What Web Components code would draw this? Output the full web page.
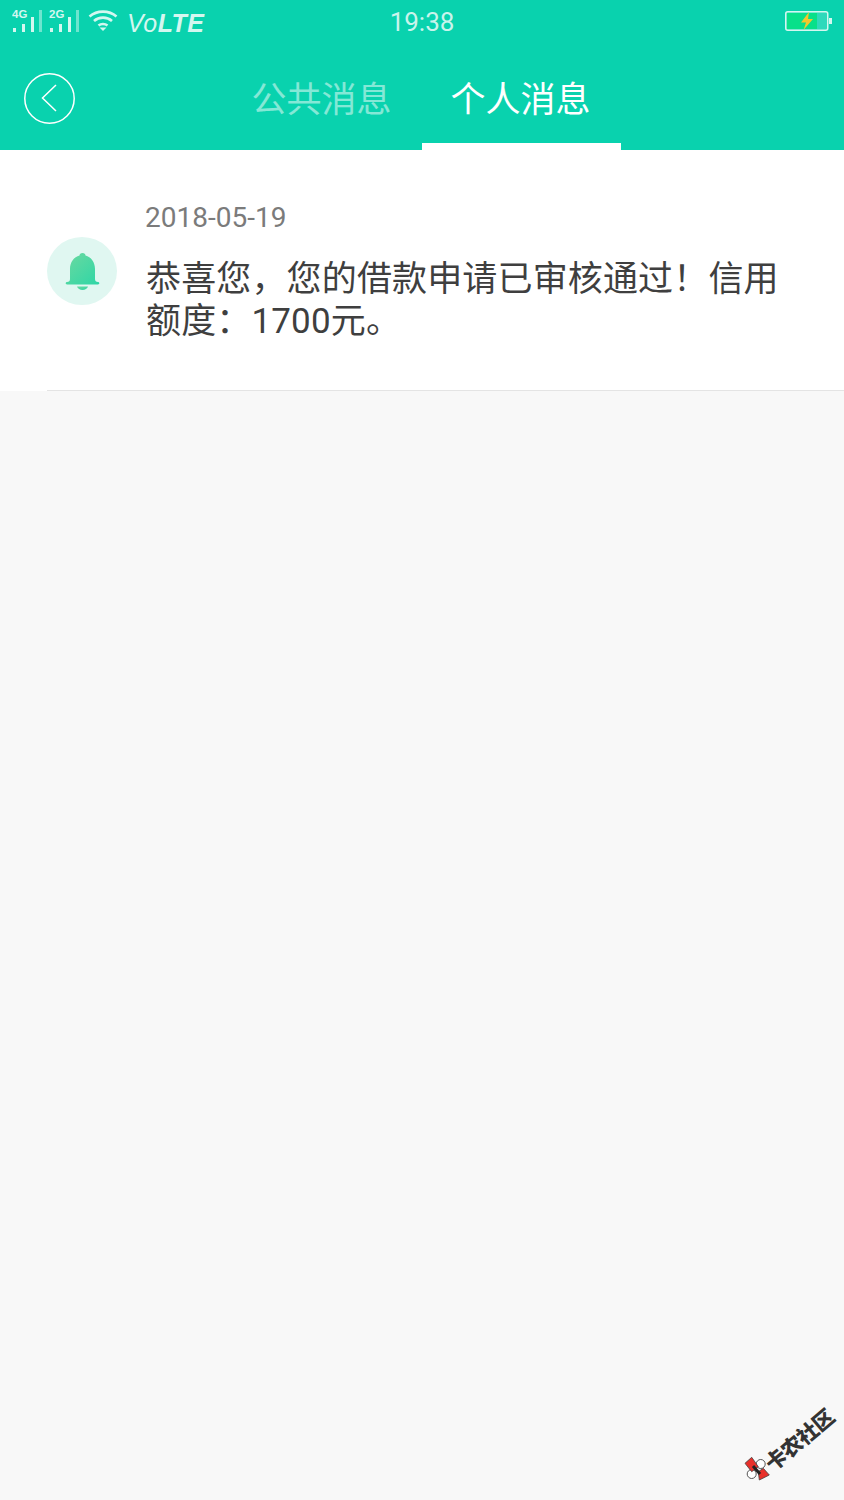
<!DOCTYPE html>
<html lang="zh">
<head>
<meta charset="utf-8">
<title>消息</title>
<style>
html,body{margin:0;padding:0;background:#f8f8f8;}
body{width:844px;height:1500px;position:relative;overflow:hidden;font-family:Roboto,"Noto Sans CJK SC",sans-serif;}
</style>
</head>
<body>
<app-header>
  <status-bar></status-bar>
  <nav-tabs></nav-tabs>
</app-header>
<message-item date="2018-05-19">恭喜您，您的借款申请已审核通过！信用额度：1700元。</message-item>
<water-mark></water-mark>

<script>
class AppHeader extends HTMLElement{
    constructor(){
        super()
        this.attachShadow({mode:'open'})
    }
    connectedCallback(){
        this.shadowRoot.innerHTML = `
        <style>
        :host{display:block;height:150px;background:#09d2ae;}
        </style>
        <slot></slot>
        `
    }
}
customElements.define('app-header',AppHeader)

class StatusBar extends HTMLElement{
    // same bars for both sim slots
    static signal(label){
        return `
        <svg class="sim" width="31" height="30" viewBox="0 -6 31 30">
            <text x="0" y="8">${label}</text>
            <g fill="#d4f7f0">
                <rect x="1" y="18" width="3" height="4"/>
                <rect x="10" y="14" width="3" height="8"/>
                <rect x="19" y="7" width="3" height="15"/>
                <rect x="27" y="0" width="3" height="22" opacity=".5"/>
            </g>
        </svg>`
    }
    constructor(){
        super()
        this.attachShadow({mode:'open'})
    }
    connectedCallback(){
        this.shadowRoot.innerHTML = `
        <style>
        :host{display:grid;grid-template-columns:1fr auto 1fr;height:44px;color:#fff;font-family:Roboto,sans-serif;}
        .left{display:flex;align-items:flex-start;padding:10px 0 0 12px;gap:6px;}
        .sim{margin-top:-6px;}
        .wifi{margin-left:2px;}
        .volte{margin-left:3px;font:italic 25px/26px "Liberation Sans",sans-serif;color:#d4f7f0;letter-spacing:.5px;}
        .volte b{font-weight:700;}
        .time{font-size:26px;line-height:44px;color:#c9f4ec;}
        .right{display:flex;justify-content:flex-end;padding:11px 12px 0 0;}
        svg{display:block;}
        text{font-family:"Liberation Sans",sans-serif;font-weight:700;font-size:11.5px;fill:#d4f7f0;}
        </style>
        <div class="left">
            ${StatusBar.signal('4G')}
            ${StatusBar.signal('2G')}
            <svg class="wifi" width="30" height="21" viewBox="0 0 30 21">
                <g fill="none" stroke="#d4f7f0" stroke-width="2.600">
                    <path d="M1.500 6.500C9 0 21 0 28.500 6.500"/>
                    <path d="M6 11C11 6.500 19 6.500 24 11"/>
                    <path d="M10.500 15.500C13 13.500 17 13.500 19.500 15.500"/>
                </g>
                <path d="M11.500 17.500h7L15 21z" fill="#d4f7f0"/>
            </svg>
            <span class="volte">Vo<b>LTE</b></span>
        </div>
        <span class="time">19:38</span>
        <div class="right">
            <svg width="47" height="20" viewBox="0 0 47 20">
                <rect x=".75" y=".75" width="42" height="18.500" rx="2" fill="#2fd9bb" stroke="#d4f7f0" stroke-width="1.500"/>
                <rect x="2" y="2" width="30" height="16" fill="#08e08a"/>
                <rect x="44" y="7" width="3" height="6" fill="#d4f7f0"/>
                <path d="M24 1 16 11.500h5L18.500 19 28 8h-5z" fill="#f4c72c"/>
            </svg>
        </div>
        `
    }
}
customElements.define('status-bar',StatusBar)

class NavTabs extends HTMLElement{
    constructor(){
        super()
        this.attachShadow({mode:'open'})
    }
    connectedCallback(){
        this.shadowRoot.innerHTML = `
        <style>
        :host{display:flex;height:106px;padding-left:24px;font:400 35px/1 "Noto Sans CJK SC",sans-serif;}
        .back{flex:none;width:51px;height:51px;margin-top:29px;}
        .tabs{display:flex;margin-left:148px;}
        .tab{width:199px;display:flex;justify-content:center;padding:35px 2px 0 0;box-sizing:border-box;height:106px;color:#fff;}
        .off{color:rgba(255,255,255,.5);}
        .on{border-bottom:7px solid #fff;}
        svg{display:block;}
        </style>
        <svg class="back" viewBox="0 0 51 51" fill="none" stroke="#fff" stroke-width="1.500">
            <circle cx="25.500" cy="25.500" r="24.700"/>
            <path d="M32 12 18.500 25 32 38"/>
        </svg>
        <div class="tabs">
            <div class="tab off">公共消息</div>
            <div class="tab on">个人消息</div>
        </div>
        `
    }
}
customElements.define('nav-tabs',NavTabs)

class MessageItem extends HTMLElement{
    constructor(){
        super()
        this.attachShadow({mode:'open'})
    }
    connectedCallback(){
        this.shadowRoot.innerHTML = `
        <style>
        :host{display:block;background:#fff;}
        .row{display:flex;align-items:center;height:241px;box-sizing:border-box;margin-left:47px;border-bottom:1px solid #e4e4e4;}
        .icon{flex:none;width:70px;height:68px;margin:2px 29px 0 0;}
        .body{padding-top:4px;}
        .date{font:28px/34px Roboto,sans-serif;color:#7b7b7b;margin:0 0 24px -1px;}
        .text{width:640px;font:35px/42px Roboto,"Noto Sans CJK SC",sans-serif;letter-spacing:.15px;color:#3f3f3f;}
        svg{display:block;}
        </style>
        <div class="row">
            <svg class="icon" viewBox="0 0 70 68">
                <defs>
                    <linearGradient id="bell" x1="0" y1="0" x2="1" y2="1">
                        <stop offset="0" stop-color="#6cd9a0"/>
                        <stop offset="1" stop-color="#2ed6a6"/>
                    </linearGradient>
                </defs>
                <ellipse cx="35" cy="34" rx="35" ry="34" fill="#e0f7f1"/>
                <path d="M35.500 16c1.800 0 3 1.200 3 2.500C44 20 48 25 48 32V42c0 2 1 3 3 3 .8 0 1.300.6 1.300 1.300 0 .7-.5 1.200-1.300 1.200H20c-.8 0-1.300-.5-1.300-1.200 0-.7.5-1.300 1.300-1.300 2 0 3-1 3-3V32c0-7 4-12 9.500-13.500 0-1.300 1.200-2.500 3-2.500z" fill="url(#bell)"/>
                <path d="M30 49.500h11c-.8 2-2.800 3.500-5.500 3.500s-4.700-1.500-5.500-3.500z" fill="url(#bell)"/>
            </svg>
            <div class="body">
                <div class="date">${this.getAttribute('date')}</div>
                <div class="text"><slot></slot></div>
            </div>
        </div>
        `
    }
}
customElements.define('message-item',MessageItem)

class WaterMark extends HTMLElement{
    constructor(){
        super()
        this.attachShadow({mode:'open'})
    }
    connectedCallback(){
        this.shadowRoot.innerHTML = `
        <style>
        :host{position:absolute;left:740px;top:1405px;width:100px;height:78px;}
        .text{position:absolute;left:18px;top:24px;transform:rotate(-40deg);white-space:nowrap;font:900 21px/1 "Noto Sans CJK SC",sans-serif;color:#333;letter-spacing:-.5px;}
        svg{position:absolute;left:2px;top:50px;display:block;}
        </style>
        <svg width="30" height="27" viewBox="0 0 30 27">
            <circle cx="18.700" cy="9" r="4.500" fill="#fff" stroke="#555" stroke-width="1"/>
            <circle cx="9.700" cy="19" r="4.500" fill="#fff" stroke="#555" stroke-width="1"/>
            <path d="M3 8.300 9.700 2.300 16.300 11.700 9.700 16.700z" fill="#e8302a" stroke="#444" stroke-width=".8"/>
            <path d="M16.300 16.700 21.300 13.300 27.300 20 17.300 25z" fill="#e8302a" stroke="#444" stroke-width=".8"/>
            <path d="M11 11 18 19" stroke="#222" stroke-width="3"/>
        </svg>
        <div class="text">卡农社区</div>
        `
    }
}
customElements.define('water-mark',WaterMark)
</script>
</body>
</html>
